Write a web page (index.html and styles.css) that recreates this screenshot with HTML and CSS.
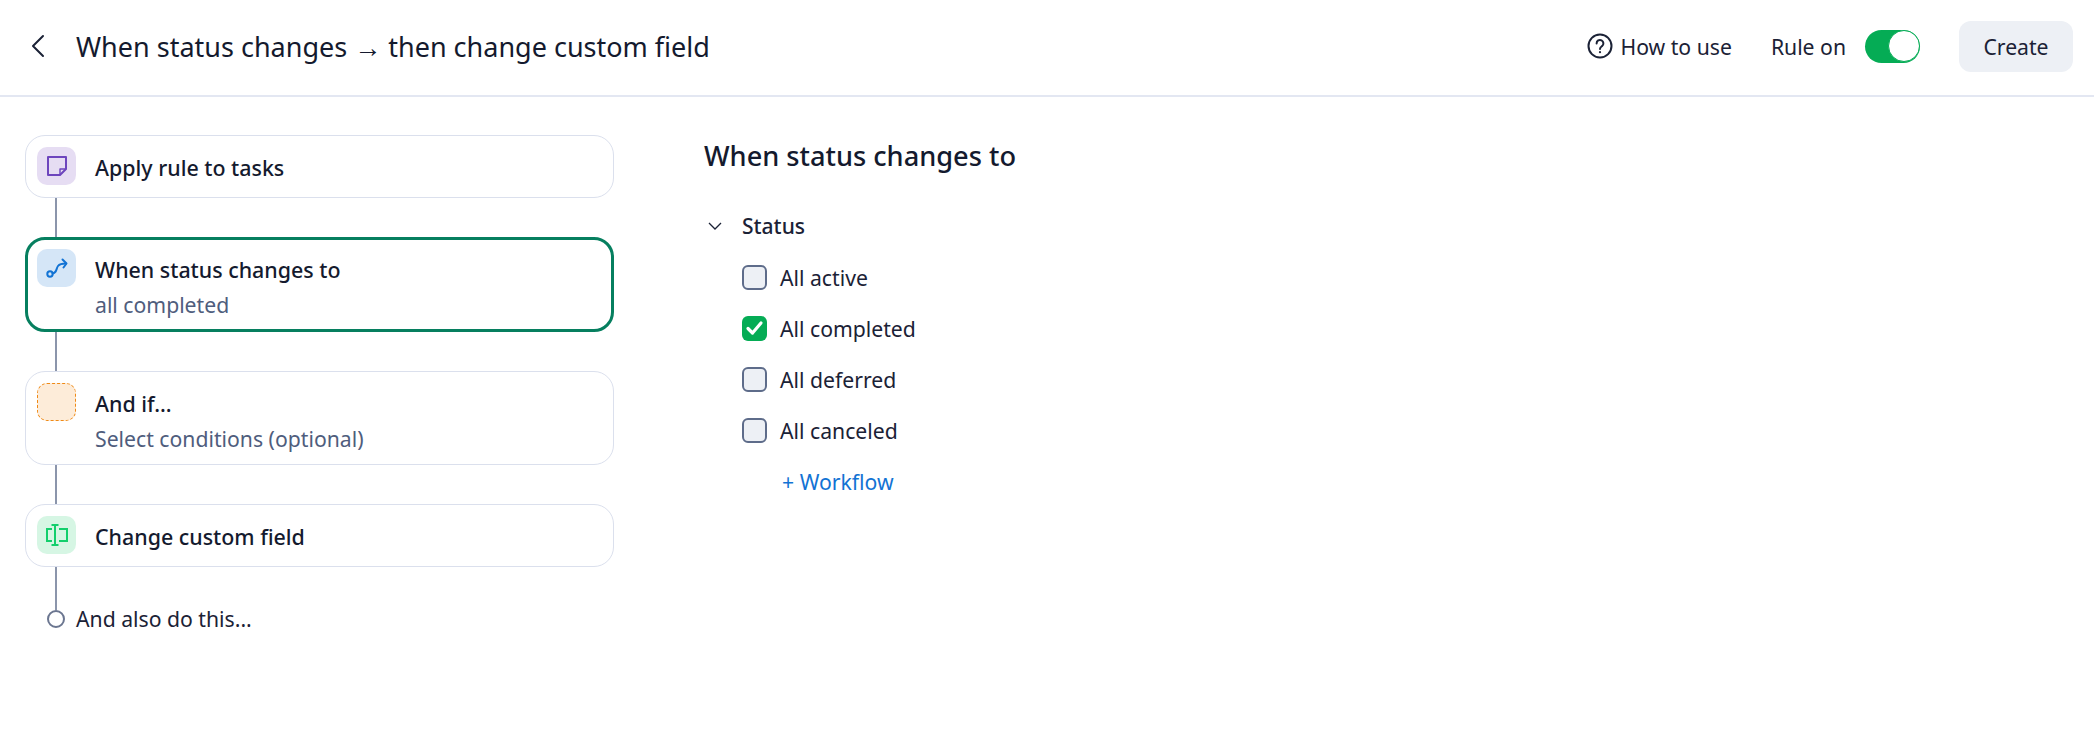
FILE: index.html
```html
<!DOCTYPE html>
<html lang="en">
<head>
    <meta charset="UTF-8">
    <meta name="viewport" content="width=device-width, initial-scale=1.0">
    <title>When status changes</title>
    <link rel="stylesheet" href="styles.css">
</head>
<body>

    <header class="topbar">
        <button class="back-button" aria-label="Back">
            <svg width="18" height="24" viewBox="0 0 18 24" fill="none" stroke="#1b2236" stroke-width="2" stroke-linecap="round" stroke-linejoin="round"><path d="M14 2 4 12l10 10"/></svg>
        </button>
        <h1 class="page-title">When status changes → then change custom field</h1>
        <a class="help-link">
            <svg width="26" height="26" viewBox="0 0 26 26" fill="none" stroke="#1b2236" stroke-width="2"><circle cx="13" cy="13" r="11.5"/><path d="M9.6 10.4a3.4 3.4 0 1 1 5.4 2.7c-1.2.9-2 1.4-2 2.9" stroke-linecap="round"/><circle cx="13" cy="19.2" r="1.1" fill="#1b2236" stroke="none"/></svg>
            How to use
        </a>
        <span class="rule-label">Rule on</span>
        <span class="toggle"><span class="toggle-knob"></span></span>
        <button class="create-button">Create</button>
    </header>

    <main class="content">
        <section class="steps">
            <div class="step">
                <span class="step-icon icon-purple">
                    <svg width="22" height="22" viewBox="0 0 22 22" fill="none" stroke="#6d45bd" stroke-width="2" stroke-linejoin="round"><path d="M2 2h18v12l-6 6H2z"/><path d="M20 14h-6v6" stroke-width="1.4"/></svg>
                </span>
                <div class="step-text"><div class="step-title">Apply rule to tasks</div></div>
            </div>
            <div class="connector"></div>
            <div class="step step-active">
                <span class="step-icon icon-blue">
                    <svg width="24" height="22" viewBox="0 0 24 22" fill="none" stroke="#1273d4" stroke-width="2" stroke-linecap="round" stroke-linejoin="round"><circle cx="5" cy="17" r="2.700"/><path d="M7.600 16.500c4.400-.5 3.400-5 5.400-7.500 1.500-1.900 4-2.500 8-2.500"/><path d="M17.500 2.500 21.500 6.500l-3 4"/></svg>
                </span>
                <div class="step-text">
                    <div class="step-title">When status changes to</div>
                    <div class="step-sub">all completed</div>
                </div>
            </div>
            <div class="connector"></div>
            <div class="step">
                <span class="step-icon icon-orange"></span>
                <div class="step-text">
                    <div class="step-title">And if...</div>
                    <div class="step-sub">Select conditions (optional)</div>
                </div>
            </div>
            <div class="connector"></div>
            <div class="step">
                <span class="step-icon icon-green">
                    <svg width="22" height="24" viewBox="0 0 22 24" fill="none" stroke="#12cf6c" stroke-width="2"><path d="M6 6H1v12h5M13 6h8v12h-8"/><path d="M5.500 2h7M5.500 22h7M9 2v20"/></svg>
                </span>
                <div class="step-text"><div class="step-title">Change custom field</div></div>
            </div>
            <div class="connector connector-end"></div>
            <div class="add-more">
                <span class="add-dot"></span>
                <span>And also do this...</span>
            </div>
        </section>

        <section class="panel">
            <h2 class="panel-title">When status changes to</h2>
            <div class="group-head">
                <svg class="chevron" width="14" height="8" viewBox="0 0 14 8" fill="none" stroke="#1b2236" stroke-width="1.300"><path d="M1 1l6 6 6-6"/></svg>
                <span>Status</span>
            </div>
            <ul class="options">
                <li class="option"><span class="checkbox"></span>All active</li>
                <li class="option">
                    <span class="checkbox checked">
                        <svg width="19" height="16" viewBox="0 0 19 16" fill="none" stroke="#fff" stroke-width="3.200" stroke-linecap="round" stroke-linejoin="round"><path d="M3 8.500 7.500 13 16 3"/></svg>
                    </span>
                    All completed
                </li>
                <li class="option"><span class="checkbox"></span>All deferred</li>
                <li class="option"><span class="checkbox"></span>All canceled</li>
                <li class="option"><a class="add-link">+ Workflow</a></li>
            </ul>
        </section>
    </main>

</body>
</html>
```

FILE: styles.css
```css
* {
    box-sizing: border-box;
}
body {
    margin: 0;
    font-family: "Noto Sans", Arial, sans-serif;
    color: #1b2236;
    background-color: white;
}
.topbar {
    display: flex;
    align-items: center;
    height: 97px;
    padding: 0 21px 3px 29px;
    border-bottom: 2px solid #e3e7f2;
}
.back-button {
    display: flex;
    padding: 0;
    border: none;
    background: none;
}
.page-title {
    margin: 0 auto 0 29px;
    font-size: 27px;
    font-weight: 400;
    color: #141a2e;
}
.help-link {
    display: flex;
    align-items: center;
    gap: 7px;
    font-size: 21.2px;
}
.rule-label {
    margin-left: 39px;
    font-size: 21.2px;
}
.toggle {
    display: flex;
    justify-content: flex-end;
    width: 55px;
    height: 33px;
    margin-left: 19px;
    border-radius: 17px;
    background-color: #05ac55;
}
.toggle-knob {
    width: 32px;
    height: 32px;
    border: 1px solid #05ac55;
    border-radius: 50%;
    background-color: white;
}
.create-button {
    width: 114px;
    height: 51px;
    margin-left: 39px;
    border: none;
    border-radius: 12px;
    background-color: #edf0f5;
    color: #1b2236;
    font-family: inherit;
    font-size: 21.2px;
}
.content {
    display: flex;
    padding: 38px 0 0 25px;
}
.steps {
    width: 589px;
}
.step {
    display: flex;
    align-items: flex-start;
    gap: 19px;
    min-height: 63px;
    padding: 11px;
    border: 1px solid #dbe0ed;
    border-radius: 20px;
    background-color: white;
}
.step-active {
    min-height: 95px;
    border: 3px solid #067f5f;
    padding: 9px;
}
.step-icon {
    display: flex;
    flex-shrink: 0;
    align-items: center;
    justify-content: center;
    width: 39px;
    height: 38px;
    border-radius: 10px;
}
.icon-purple {
    background-color: #e6ddf3;
}
.icon-blue {
    background-color: #d5e6f7;
}
.icon-orange {
    border: 1px dashed #ef8a17;
    background-color: #fdecd9;
}
.icon-green {
    background-color: #d6f6e4;
}
.step-text {
    padding-top: 7px;
}
.step-title {
    font-size: 21.4px;
    font-weight: 500;
    line-height: 27px;
    color: #141a2e;
}
.step-sub {
    margin-top: 8px;
    font-size: 21.2px;
    line-height: 28px;
    color: #4f5d7d;
}
.connector {
    width: 2px;
    height: 39px;
    margin-left: 30px;
    background-color: #8b95ab;
}
.connector-end {
    height: 43px;
}
.add-more {
    display: flex;
    align-items: center;
    gap: 11px;
    margin-left: 22px;
    font-size: 21.2px;
    line-height: 18px;
}
.add-dot {
    width: 18px;
    height: 18px;
    border: 2px solid #6b7690;
    border-radius: 50%;
}
.panel {
    margin: 3px 0 0 90px;
}
.panel-title {
    margin: 0;
    font-size: 27.2px;
    font-weight: 500;
    line-height: 36px;
    color: #141a2e;
}
.group-head {
    display: flex;
    align-items: center;
    margin-top: 38px;
    font-size: 21px;
    font-weight: 500;
    line-height: 28px;
}
.chevron {
    margin: 0 20px 0 4px;
}
.options {
    margin: 11.5px 0 0;
    padding: 0 0 0 38px;
    list-style: none;
}
.option {
    display: flex;
    align-items: center;
    gap: 13px;
    height: 51.2px;
    font-size: 21.2px;
}
.checkbox {
    display: flex;
    align-items: center;
    justify-content: center;
    width: 25px;
    height: 25px;
    border: 2px solid #5e6c8a;
    border-radius: 6px;
    background-color: #edf0f5;
}
.checked {
    border: none;
    background-color: #05ac55;
}
.add-link {
    margin-left: 40px;
    color: #1273d4;
}
```
